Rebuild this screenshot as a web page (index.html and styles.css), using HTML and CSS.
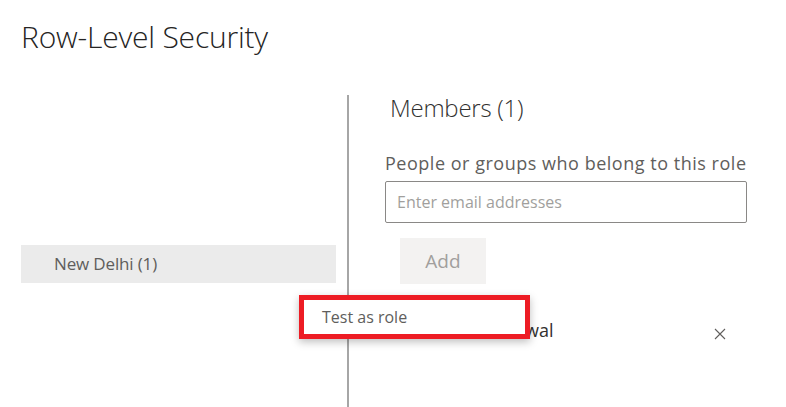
FILE: index.html
```html
<!DOCTYPE html>
<html lang="en">
<head>
<meta charset="utf-8">
<title>Row-Level Security</title>
<link rel="stylesheet" href="styles.css">
</head>
<body>
<div class="page">
  <h1 class="title">Row-Level Security</h1>
  <div class="panes">
    <div class="roles">
      <div class="role-item">New Delhi (1)</div>
      <div class="menu">
        <div class="menu-item">Test as role</div>
      </div>
    </div>
    <div class="members">
      <h2 class="members-title">Members (1)</h2>
      <label class="field-label">People or groups who belong to this role</label>
      <div class="email-input">Enter email addresses</div>
      <div class="add-row"><button class="add-btn">Add</button></div>
      <div class="member-row">
        <span class="member-name">Ankit Oswal</span>
        <svg class="remove" width="12" height="12" viewBox="0 0 12 12"><path d="M1 1L11 11M11 1L1 11" stroke="#605e5c" stroke-width="1.1" fill="none"/></svg>
      </div>
    </div>
  </div>
</div>
</body>
</html>
```
FILE: styles.css
```css
* { box-sizing: border-box; }
html, body { margin: 0; padding: 0; background: #fff; }
body {
  font-family: "Open Sans", "Noto Sans", "Liberation Sans", sans-serif;
  color: #323130;
  width: 786px;
  height: 407px;
  overflow: hidden;
}
.page { padding: 17px 0 0 21px; }
.title {
  margin: 0;
  font-weight: 300;
  font-size: 30px;
  line-height: 40px;
  color: #252423;
  letter-spacing: -0.2px;
}
.panes {
  display: flex;
  margin-top: 38px;
  height: 320px;
}
.roles {
  position: relative;
  width: 326px;
  padding-top: 150px;
}
.role-item {
  width: 315px;
  height: 38px;
  background: #ebebeb;
  font-size: 17px;
  line-height: 38px;
  padding-left: 33px;
  color: #605e5c;
  letter-spacing: -0.15px;
}
.menu {
  position: absolute;
  left: 278px;
  top: 200px;
  width: 231px;
  height: 44px;
  background: #fff;
  border: 5px solid #ed1c24;
  box-shadow: 0 3px 8px rgba(0,0,0,0.25);
  z-index: 2;
}
.menu-item {
  font-size: 16px;
  line-height: 34px;
  padding-left: 18px;
  color: #605e5c;
}
.members {
  border-left: 2px solid #a6a6a6;
  padding-left: 36px;
  width: 420px;
}
.members-title {
  margin: 0 0 0 5px;
  font-weight: 300;
  font-size: 24px;
  line-height: 26px;
  color: #323130;
  letter-spacing: -0.25px;
}
.field-label {
  display: block;
  margin-top: 30px;
  font-size: 18px;
  line-height: 24px;
  color: #605e5c;
  letter-spacing: 0.52px;
}
.email-input {
  margin-top: 6px;
  width: 362px;
  height: 42px;
  border: 1px solid #8a8886;
  border-radius: 2px;
  padding-left: 11px;
  font-size: 16px;
  line-height: 40px;
  color: #a19f9d;
}
.add-row { padding: 15px 0 0 15px; }
.add-btn {
  width: 86px;
  height: 46px;
  border: none;
  background: #f3f2f1;
  font-family: inherit;
  font-size: 19px;
  color: #a19f9d;
  padding: 0;
}
.member-row {
  display: flex;
  align-items: center;
  justify-content: space-between;
  width: 341px;
  margin-top: 34px;
  padding-left: 70px;
}
.member-name {
  font-size: 18px;
  line-height: 24px;
  margin-bottom: 8px;
  color: #323130;
}
.remove { display: block; }
```
